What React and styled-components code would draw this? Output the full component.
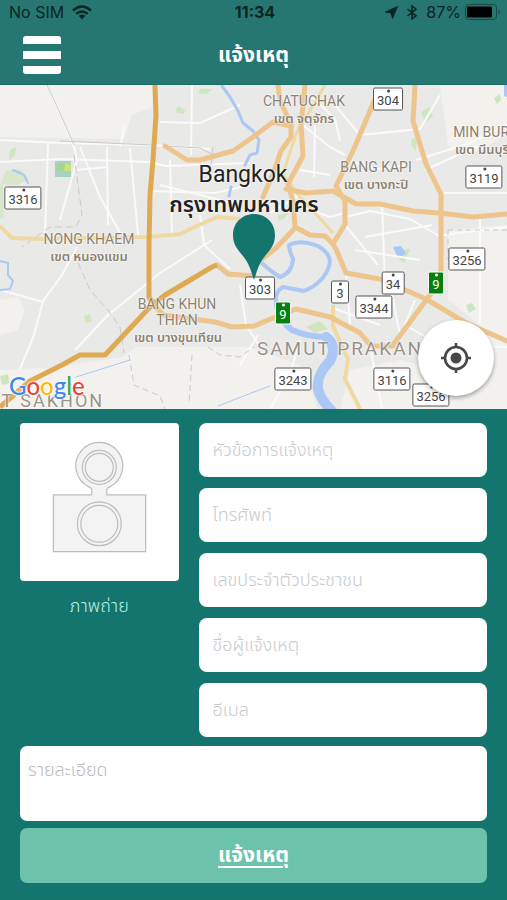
import React, { useState } from 'react'
import styled, { createGlobalStyle } from 'styled-components'

const mapLabels = [
  { text: 'CHATUCHAK', x: 304, y: 16, size: 14 },
  { text: 'เขต จตุจักร', x: 304, y: 34, size: 13, thai: true },
  { text: 'BANG KAPI', x: 376, y: 82, size: 14 },
  { text: 'เขต บางกะปิ', x: 376, y: 100, size: 13, thai: true },
  { text: 'MIN BURI', x: 483, y: 47, size: 14 },
  { text: 'เขต มีนบุรี', x: 482, y: 65, size: 13, thai: true },
  { text: 'NONG KHAEM', x: 89, y: 154, size: 14 },
  { text: 'เขต หนองแขม', x: 89, y: 172, size: 13, thai: true },
  { text: 'BANG KHUN', x: 177, y: 219, size: 14 },
  { text: 'THIAN', x: 177, y: 235, size: 14 },
  { text: 'เขต บางขุนเทียน', x: 178, y: 253, size: 13, thai: true },
]

const shields = [
  { text: '304', x: 388, y: 14 },
  { text: '3119', x: 484, y: 92 },
  { text: '3316', x: 23, y: 113 },
  { text: '3256', x: 467, y: 174 },
  { text: '303', x: 260, y: 203 },
  { text: '3', x: 340, y: 207 },
  { text: '34', x: 393, y: 198 },
  { text: '3344', x: 374, y: 222 },
  { text: '9', x: 436, y: 198, green: true },
  { text: '9', x: 283, y: 228, green: true },
  { text: '3243', x: 293, y: 294 },
  { text: '3116', x: 392, y: 294 },
  { text: '3256', x: 431, y: 310 },
]

const fields = [
  { name: 'topic', type: 'text', label: 'หัวข้อการแจ้งเหตุ' },
  { name: 'phone', type: 'tel', label: 'โทรศัพท์' },
  { name: 'citizenId', type: 'text', label: 'เลขประจำตัวประชาชน' },
  { name: 'reporter', type: 'text', label: 'ชื่อผู้แจ้งเหตุ' },
  { name: 'email', type: 'email', label: 'อีเมล' },
]

const logo = [
  ['G', '#4285f4'],
  ['o', '#ea4335'],
  ['o', '#fbbc05'],
  ['g', '#4285f4'],
  ['l', '#34a853'],
  ['e', '#ea4335'],
]

/* Streets, parks and the river under the map labels. */
const MapDrawing = () => (
  <MapSvg viewBox="0 0 507 324" preserveAspectRatio="none" aria-hidden="true">
    <rect width="507" height="324" fill="#e9e9e8" />
    <g fill="#f2f1ee">
      <path d="M0 0H152V22L132 30L124 54L0 52Z" />
      <path d="M0 215L18 212L25 225L18 245L0 250Z" />
      <path d="M0 285L60 282L122 272L136 262L250 262L300 280L318 324H0Z" />
      <path d="M440 0H507V50L470 70L448 60Z" />
      <path d="M448 145L507 140V324H470L460 270L480 240L448 215Z" />
      <path d="M340 324L350 285L400 275L507 300V324Z" />
    </g>
    <g fill="#cfe5c0">
      <path d="M200 4L212 4L207 9L198 8Z" />
      <path d="M178 21L186 25L183 29L175 27Z" />
      <path d="M10 65L16 62L15 70L9 76Z" />
      <path d="M6 86L20 84L28 94L18 100L3 99L4 132L0 134V100Z" opacity=".7" />
      <path d="M421 27L429 22L433 32L425 37Z" />
      <path d="M412 54L417 52L416 66L411 60Z" />
      <path d="M494 13L500 9L501 15L497 19Z" />
      <path d="M84 231L90 229L92 236L86 238Z" />
      <path d="M278 130L288 128L284 134L278 135Z" />
      <path d="M306 242L320 236L328 244L315 248Z" />
      <path d="M402 164L410 164L404 178L399 174Z" />
      <path d="M466 220L472 218L476 224L469 228Z" />
      <path d="M0 291L8 289L10 298L2 300Z" />
    </g>
    <path d="M55 76H71V92H55Z" fill="#a5d3c4" />
    <path d="M57 78H66V86H57Z" fill="#a5d48f" />
    <path d="M65 78L71 80V86L64 86Z" fill="#c9e478" />
    <path d="M393 162L401 161L406 169L398 173Z" fill="#a9c9f5" />
    <g fill="none" stroke="#fafafa" strokeWidth="2" strokeLinejoin="round">
      <path d="M47 0L60 28L74 62L77 75L60 135" />
      <path d="M0 77L60 74L150 77L165 81L250 78" />
      <path d="M0 55L60 58L150 60L210 64" />
      <path d="M160 37L200 38L240 20" />
      <path d="M192 0L191 70" />
      <path d="M48 58L45 150M80 62L100 112L122 151" />
      <path d="M107 62L108 140M75 85L108 82" />
      <path d="M77 162L62 190L43 216L34 250L20 284" />
      <path d="M0 205L43 217M75 265L108 230L160 188L212 155" />
      <path d="M130 63L138 150M150 106L215 108L250 100" />
      <path d="M170 75L172 150M200 130L204 160L230 184" />
      <path d="M120 62L125 40M160 100L240 120" />
      <path d="M303 40L330 62L345 70M310 10L335 34L340 56" />
      <path d="M335 20L360 50L420 44L440 10" />
      <path d="M345 75L378 84L410 80M315 40L314 92" />
      <path d="M300 85L330 90M346 132L370 126L410 134L441 152" />
      <path d="M382 118L385 200M365 152L432 140M345 140L378 180" />
      <path d="M416 75L470 58L507 40M425 85L480 60" />
      <path d="M441 108H507M443 150L507 142M480 130V240" />
      <path d="M300 110L270 128M290 118L330 132L345 128" />
      <path d="M346 188L350 240M355 165L420 175M330 222L380 240" />
      <path d="M390 200L400 250M415 215L405 240L440 260L507 262" />
      <path d="M240 200L246 240L260 262M258 250L240 280" />
      <path d="M370 262L382 324M300 255L290 290L270 324" />
    </g>
    <g fill="none" stroke="#c9c9cb" strokeWidth="1">
      <path d="M60 56L153 60M165 61L200 63L213 70M213 62L211 80" />
      <path d="M74 70L78 100L82 130L76 142L50 142L22 162" strokeDasharray="7 4" />
      <path d="M78 178L90 205L108 225L120 242L124 268" strokeDasharray="7 4" />
      <path d="M129 270L134 300L160 311L165 324" strokeDasharray="6 4" />
      <path d="M192 270L189 320M208 262L220 270L240 272L254 262" strokeDasharray="6 4" />
      <path d="M448 145H507M448 145V175" strokeDasharray="5 4" />
      <path d="M47 0L60 28L74 60" />
    </g>
    <g fill="none" stroke="#abc8f4" strokeWidth="2" strokeLinecap="round" strokeLinejoin="round">
      <path d="M222 1L230 12L238 26L243 38L253 46L259 55L257 68L250 70L245 80M231 102L229 111" strokeWidth="3" />
      <path d="M0 176L8 178L8 190L13 196L10 204L0 205" />
      <path d="M13 85L24 90L28 98" />
      <path d="M76 292L130 275M218 321L254 307M254 307L270 301" strokeWidth="1" />
      <path d="M248 161Q258 178 280 192Q292 188 293 174Q289 165 289 160Q300 154 318 161Q333 170 329 181Q324 198 304 206L283 202Q273 208 277 220" strokeWidth="4" />
      <path d="M277 220Q279 236 292 245Q308 252 326 252" strokeWidth="6" />
      <path d="M326 252Q338 261 330 276Q316 290 318 304Q320 314 332 326" strokeWidth="10" />
      <path d="M507 0V9" strokeWidth="6" />
    </g>
    <g fill="none" stroke="#efd9a0" strokeWidth="4" strokeLinejoin="round">
      <path d="M0 141L12 153L43 154L147 152L180 149L197 141L217 132L240 134" />
      <path d="M333 220V241L348 274L345 294L360 324" />
      <path d="M325 0L296 49L283 89L300 112L315 128L333 148" strokeWidth="3" />
    </g>
    <g fill="none" stroke="#edc48c" strokeWidth="5" strokeLinecap="round" strokeLinejoin="round">
      <path d="M217 180L228 189L254 191" />
      <path d="M150 215L163 230L215 237L232 242L254 241L273 233L296 224L330 232L360 248L371 261H393" />
      <path d="M278 0L280 16L291 39V52L281 66L273 89L263 112" />
      <path d="M165 61L187 75H200L233 66L253 52L273 37L291 41" />
      <path d="M305 0L301 39L303 71L288 99L293 116L295 142L310 150L325 151L333 159" />
      <path d="M295 143L276 163L254 180" />
      <path d="M286 104L306 108L333 106L356 119L380 119L413 126L440 128L473 132L507 129" />
      <path d="M375 14L353 66L336 101L345 116V139L333 159L336 164L346 188L380 194L426 214L466 238L507 256" />
      <path d="M415 0L413 36L426 79L441 109V185L430 210L393 260" />
    </g>
    <g fill="none" stroke="#dfa952" strokeWidth="5" strokeLinejoin="round">
      <path d="M155 0L156 30L153 75L150 110L149 160V212L156 222" />
      <path d="M0 322L30 296L62 280L80 270H105L150 222L165 210L212 182L217 180" />
    </g>
  </MapSvg>
)

const StatusIcons = () => (
  <>
    <svg width="13" height="13" viewBox="0 0 13 13" aria-hidden="true">
      <path d="M12.500 .5L7.500 12.500L6.200 7L.5 6Z" fill="#0c2523" stroke="#0c2523" strokeLinejoin="round" />
    </svg>
    <svg width="12" height="15" viewBox="0 0 12 15" aria-hidden="true">
      <path d="M1.500 4L10 10.800L6 14V1L10 4.200L1.500 11" fill="none" stroke="#0c2523" strokeWidth="1.600" />
    </svg>
  </>
)

const App = () => {
  const [form, setForm] = useState({})

  const changeHandler = (event) => {
    setForm({ ...form, [event.target.name]: event.target.value })
  }

  return (
    <Page>
      <GlobalStyle />
      <TopBar>
        <StatusBar>
          <StatusSide>
            <span>No SIM</span>
            <svg width="20" height="15" viewBox="0 0 20 15" aria-hidden="true">
              <g fill="none" stroke="#0c2523" strokeWidth="2.400">
                <path d="M1 5.500Q10 -2.500 19 5.500" />
                <path d="M4.300 8.900Q10 3.900 15.700 8.900" />
              </g>
              <path d="M6.800 11Q10 8.200 13.200 11L10 14.200Z" fill="#0c2523" />
            </svg>
          </StatusSide>
          <Clock>11:34</Clock>
          <StatusSide $end>
            <StatusIcons />
            <Battery>
              <span>87%</span>
              <svg width="36" height="16" viewBox="0 0 36 16" aria-hidden="true">
                <rect x=".5" y=".5" width="31" height="15" rx="3" fill="none" stroke="#164b48" />
                <rect x="2" y="2.500" width="25" height="11" rx="1" fill="#000" />
                <path d="M33.500 5.500Q36 8 33.500 10.500Z" fill="#164b48" />
              </svg>
            </Battery>
          </StatusSide>
        </StatusBar>
        <Header>
          <MenuButton type="button" aria-label="เมนู">
            <svg width="38" height="38" viewBox="0 0 38 38" aria-hidden="true">
              <path d="M3 0H35Q38 0 38 3V8H0V3Q0 0 3 0ZM0 15H38V23H0ZM0 30H38V35Q38 38 35 38H3Q0 38 0 35Z" fill="#fff" />
            </svg>
          </MenuButton>
          <Title>แจ้งเหตุ</Title>
        </Header>
      </TopBar>

      <MapArea>
        <MapDrawing />
        {mapLabels.map((item) => (
          <MapLabel key={item.text} $x={item.x} $y={item.y} $size={item.size} $thai={item.thai}>
            {item.text}
          </MapLabel>
        ))}
        <RegionLabel $x={340} $y={264} $size={19}>SAMUT PRAKAN</RegionLabel>
        <RegionLabel $x={46} $y={316} $size={18}>UT SAKHON</RegionLabel>
        <CityLabel $x={243} $y={90} $size={23}>Bangkok</CityLabel>
        <CityLabel $x={244} $y={120} $size={22} $thai>กรุงเทพมหานคร</CityLabel>
        {shields.map((item, index) => (
          <Shield key={index} $x={item.x} $y={item.y} $green={item.green}>
            {item.text}
          </Shield>
        ))}
        <Pin viewBox="0 0 44 68" aria-hidden="true">
          <path d="M22 1C34 1 43 10 43 22C43 32 38 37 33 43C27 50 25 58 22 67C19 58 17 50 11 43C6 37 1 32 1 22C1 10 10 1 22 1Z" fill="#14756f" />
        </Pin>
        <GoogleLogo>
          {logo.map(([letter, color], index) => (
            <LogoLetter key={index} $color={color}>{letter}</LogoLetter>
          ))}
        </GoogleLogo>
        <LocateButton type="button" aria-label="ตำแหน่งของฉัน">
          <svg width="32" height="32" viewBox="0 0 32 32" aria-hidden="true">
            <circle cx="16" cy="16" r="11" fill="none" stroke="#484848" strokeWidth="2.600" />
            <circle cx="16" cy="16" r="5.500" fill="#484848" />
            <path d="M16 1V6M16 26V31M1 16H6M26 16H31" stroke="#484848" strokeWidth="2.600" />
          </svg>
        </LocateButton>
      </MapArea>

      <Form onSubmit={(event) => event.preventDefault()}>
        <Columns>
          <PhotoColumn>
            <PhotoButton type="button" aria-labelledby="photo-caption">
              <svg viewBox="0 0 159 158" width="100%" aria-hidden="true">
                <g fill="#f3f3f3" stroke="#bcbcbc" strokeWidth="1.200">
                  <path d="M33.500 72H72V67Q72 65 69 64A23.500 23.500 0 1 1 90 64Q87 65 87 67V72H126V129H33.500Z" />
                  <circle cx="79.500" cy="44.500" r="17" />
                  <circle cx="79.500" cy="44.500" r="14" />
                  <circle cx="79.500" cy="101" r="22" />
                  <circle cx="79.500" cy="101" r="18.500" />
                </g>
              </svg>
            </PhotoButton>
            <Caption id="photo-caption">ภาพถ่าย</Caption>
          </PhotoColumn>
          <FieldColumn>
            {fields.map((field) => (
              <Field
                key={field.name}
                name={field.name}
                type={field.type}
                placeholder={field.label}
                aria-label={field.label}
                value={form[field.name] || ''}
                onChange={changeHandler}
              />
            ))}
          </FieldColumn>
        </Columns>
        <Details
          name="details"
          placeholder="รายละเอียด"
          aria-label="รายละเอียด"
          value={form.details || ''}
          onChange={changeHandler}
        />
        <SubmitButton type="submit">แจ้งเหตุ</SubmitButton>
      </Form>
    </Page>
  )
}

export default App

const GlobalStyle = createGlobalStyle`
  * {
    box-sizing: border-box;
  }
  body {
    margin: 0;
    background-color: #14756f;
    font-family: "Noto Sans Thai", "Noto Sans", "Liberation Sans", sans-serif;
  }
  button, input, textarea {
    font-family: inherit;
  }
`

const Page = styled.div`
  min-height: 100vh;
  background-color: #14756f;
`

const TopBar = styled.header`
  background-color: #267672;
  border-bottom: 1px solid #1c6c68;
`

const StatusBar = styled.div`
  display: grid;
  grid-template-columns: 1fr auto 1fr;
  align-items: center;
  height: 24px;
  padding: 0 6px 0 9px;
  font-family: Inter, "Liberation Sans", sans-serif;
  font-size: 16px;
  color: #0c2523;
`

const StatusSide = styled.div`
  display: flex;
  align-items: center;
  justify-content: ${({ $end }) => ($end ? 'flex-end' : 'flex-start')};
  gap: 8px;
`

const Battery = styled.div`
  display: flex;
  align-items: center;
  gap: 4px;
`

const Clock = styled.div`
  font-weight: 700;
`

const Header = styled.div`
  display: grid;
  grid-template-columns: 1fr auto 1fr;
  align-items: center;
  height: 60px;
  padding: 2px 23px 0;
`

const MenuButton = styled.button`
  display: flex;
  justify-self: start;
  padding: 0;
  border: none;
  background: none;
  cursor: pointer;
`

const Title = styled.h1`
  margin: 0;
  padding-top: 2px;
  font-size: 21px;
  line-height: 30px;
  font-weight: 700;
  color: #fff;
`

const MapArea = styled.section`
  position: relative;
  height: 324px;
  overflow: hidden;
`

const MapSvg = styled.svg`
  display: block;
  width: 100%;
  height: 100%;
`

/* Everything pinned to the map is centred on its own point. */
const MapPoint = styled.span`
  position: absolute;
  left: ${({ $x }) => ($x / 507) * 100}%;
  top: ${({ $y }) => $y}px;
  transform: translate(-50%, -50%);
  white-space: nowrap;
`

const MapLabel = styled(MapPoint)`
  font-family: Roboto, "Noto Sans Thai", sans-serif;
  font-size: ${({ $size }) => $size}px;
  line-height: 16px;
  font-weight: ${({ $thai }) => ($thai ? 600 : 400)};
  color: #8c8070;
  text-shadow: 0 0 2px #fff, 0 0 2px #fff;
`

const RegionLabel = styled(MapLabel)`
  line-height: 20px;
  letter-spacing: 2px;
  color: #9a9189;
`

const CityLabel = styled(MapLabel)`
  line-height: 28px;
  color: #222;
`

const Shield = styled(MapPoint)`
  min-width: ${({ $green }) => ($green ? 16 : 18)}px;
  padding: 4px 3px 1px;
  border: ${({ $green }) => ($green ? '1px solid #fff' : '1px solid #555')};
  border-radius: 2px;
  background-color: ${({ $green }) => ($green ? '#088010' : '#fff')};
  color: ${({ $green }) => ($green ? '#fff' : '#444')};
  font-family: Roboto, sans-serif;
  font-size: 13px;
  line-height: 16px;
  text-align: center;

  &::before {
    content: '';
    position: absolute;
    top: 1px;
    left: calc(50% - 1px);
    width: 3px;
    height: 3px;
    border-radius: 50%;
    background-color: currentColor;
  }
`

const Pin = styled.svg`
  position: absolute;
  left: 50%;
  top: 128px;
  width: 44px;
  height: 68px;
  transform: translateX(-50%);
`

const GoogleLogo = styled.div`
  position: absolute;
  left: 9px;
  bottom: 9px;
  font-family: Lato, sans-serif;
  font-size: 24px;
  line-height: 28px;
  text-shadow: 0 0 2px #fff, 0 0 2px #fff, 0 0 3px #fff;
`

const LogoLetter = styled.span`
  color: ${({ $color }) => $color};
  font-weight: 500;
`

const LocateButton = styled.button`
  position: absolute;
  right: 13px;
  bottom: 13px;
  display: flex;
  align-items: center;
  justify-content: center;
  width: 76px;
  height: 76px;
  padding: 0;
  border: none;
  border-radius: 50%;
  background-color: #fff;
  box-shadow: 0 2px 4px rgba(0, 0, 0, 0.35);
  cursor: pointer;
`

const Form = styled.form`
  padding: 14px 20px 16px;
`

const Columns = styled.div`
  display: grid;
  grid-template-columns: 11fr 20fr;
  gap: 20px;
`

const PhotoColumn = styled.div`
  text-align: center;
`

const PhotoButton = styled.button`
  display: block;
  width: 100%;
  padding: 0;
  border: none;
  border-radius: 4px;
  background-color: #fff;
  cursor: pointer;

  svg {
    display: block;
  }
`

const Caption = styled.div`
  margin-top: 12px;
  font-size: 18px;
  line-height: 28px;
  font-weight: 300;
  color: #b4efe8;
`

const FieldColumn = styled.div`
  display: flex;
  flex-direction: column;
  gap: 11px;
`

const Field = styled.input`
  width: 100%;
  height: 54px;
  padding: 0 14px;
  border: none;
  border-radius: 8px;
  background-color: #fff;
  font-size: 18px;
  font-weight: 300;
  color: #333;

  &::placeholder {
    color: #cacace;
    opacity: 1;
  }
`

const Details = styled.textarea`
  display: block;
  width: 100%;
  height: 75px;
  margin-top: 9px;
  padding: 11px 8px;
  border: none;
  border-radius: 7px;
  background-color: #fff;
  font-size: 18px;
  line-height: 28px;
  font-weight: 300;
  color: #333;
  resize: none;

  &::placeholder {
    color: #bbbbbd;
    opacity: 1;
  }
`

const SubmitButton = styled.button`
  display: block;
  width: 100%;
  height: 55px;
  margin-top: 7px;
  border: none;
  border-radius: 7px;
  background-color: #6dc2ac;
  font-size: 21px;
  font-weight: 700;
  color: #fff;
  text-decoration: underline;
  text-underline-offset: 4px;
  cursor: pointer;
`
